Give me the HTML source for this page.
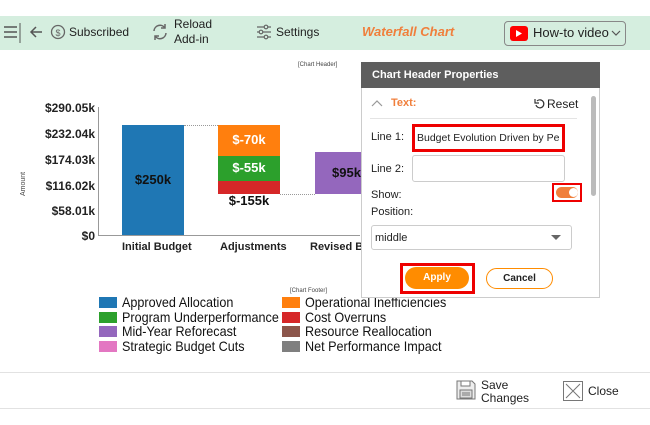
<!DOCTYPE html>
<html><head><meta charset="utf-8"><style>
*{box-sizing:border-box;margin:0;padding:0}
body{width:650px;height:425px;background:#fff;position:relative;overflow:hidden;font-family:"Liberation Sans",Arial,sans-serif;color:#222}
.a{position:absolute}
.tb{left:0;top:16px;width:650px;height:34px;background:#d5eedf}
.seg{font-family:"Liberation Sans",sans-serif;font-size:12px;color:#222}
.yl{font-weight:bold;font-size:12px;right:555px;text-align:right;width:80px}
.xl{font-weight:bold;font-size:11px;top:241px}
.lg{font-size:14px;color:#111;white-space:nowrap;transform:scaleX(0.9);transform-origin:left top}
.sw{width:18px;height:11px}
</style></head><body>
<div class="a tb"></div>
<svg class="a" style="left:3px;top:22px" width="44" height="22"><g stroke="#555" stroke-width="1.5" fill="none"><path d="M1 5h13M1 10h13M1 15h13"/><path d="M17 1v20" stroke-width="1"/><path d="M29 10h10M33 5l-5 5 5 5"/></g></svg>
<svg class="a" style="left:50px;top:24px" width="16" height="16"><circle cx="8" cy="8" r="6.5" stroke="#666" stroke-width="1.3" fill="none"/><text x="8" y="12" font-size="9" text-anchor="middle" fill="#666" font-family="Liberation Sans">$</text></svg>
<div class="a seg" style="left:69px;top:25px">Subscribed</div>
<svg class="a" style="left:151px;top:23px" width="18" height="18"><g stroke="#666" stroke-width="1.5" fill="none"><path d="M3 8a6 6 0 0 1 11-3"/><path d="M15 10a6 6 0 0 1-11 3"/><path d="M14 1v4h-4M4 17v-4h4"/></g></svg>
<div class="a seg" style="left:174px;top:17px;line-height:15px">Reload<br>Add-in</div>
<svg class="a" style="left:256px;top:24px" width="16" height="16"><g stroke="#666" stroke-width="1.2" fill="none"><path d="M1 3h14M1 8h14M1 13h14"/><circle cx="10" cy="3" r="1.8" fill="#d5eedf"/><circle cx="5" cy="8" r="1.8" fill="#d5eedf"/><circle cx="10" cy="13" r="1.8" fill="#d5eedf"/></g></svg>
<div class="a seg" style="left:276px;top:25px">Settings</div>
<div class="a" style="left:362px;top:24px;font-size:13px;font-weight:bold;font-style:italic;color:#f07f3c">Waterfall Chart</div>
<div class="a" style="left:504px;top:21px;width:122px;height:25px;border:1px solid #888;border-radius:4px"></div>
<div class="a" style="left:510px;top:26px;width:18px;height:15px;background:#f00;border-radius:3px"></div>
<svg class="a" style="left:515px;top:29px" width="8" height="9"><path d="M1 1l6 3.5-6 3.5z" fill="#fff"/></svg>
<div class="a seg" style="left:533px;top:25px;font-size:13px">How-to video</div>
<svg class="a" style="left:611px;top:30px" width="10" height="7"><path d="M1 1l4 4 4-4" stroke="#555" fill="none" stroke-width="1.2"/></svg>

<div class="a" style="left:298px;top:62px;font-size:6px;color:#444">[Chart Header]</div>
<div class="a" style="left:98px;top:107px;width:1px;height:129px;background:#999"></div>
<div class="a" style="left:98px;top:235px;width:262px;height:1px;background:#999"></div>
<div class="a yl" style="top:101px">$290.05k</div>
<div class="a yl" style="top:127px">$232.04k</div>
<div class="a yl" style="top:153px">$174.03k</div>
<div class="a yl" style="top:179px">$116.02k</div>
<div class="a yl" style="top:204px">$58.01k</div>
<div class="a yl" style="top:229px">$0</div>
<div class="a" style="left:20px;top:196px;font-size:7px;color:#444;transform:rotate(-90deg);transform-origin:left top">Amount</div>
<div class="a" style="left:122px;top:125px;width:62px;height:110px;background:#1f77b4"></div>
<div class="a" style="left:122px;top:172px;width:62px;text-align:center;font-weight:bold;font-size:13px;color:#111">$250k</div>
<div class="a" style="left:184px;top:125px;width:34px;border-top:1px dotted #999"></div>
<div class="a" style="left:218px;top:125px;width:62px;height:31px;background:#ff7f0e"></div>
<div class="a" style="left:218px;top:156px;width:62px;height:25px;background:#2ca02c"></div>
<div class="a" style="left:218px;top:181px;width:62px;height:13px;background:#d62728"></div>
<div class="a" style="left:218px;top:132px;width:62px;text-align:center;font-weight:bold;font-size:13px;color:#fff">$-70k</div>
<div class="a" style="left:218px;top:160px;width:62px;text-align:center;font-weight:bold;font-size:13px;color:#fff">$-55k</div>
<div class="a" style="left:218px;top:193px;width:62px;text-align:center;font-weight:bold;font-size:13px;color:#111">$-155k</div>
<div class="a" style="left:280px;top:194px;width:35px;border-top:1px dotted #999"></div>
<div class="a" style="left:315px;top:152px;width:46px;height:42px;background:#9467bd"></div>
<div class="a" style="left:332px;top:165px;font-weight:bold;font-size:13px;color:#111">$95k</div>
<div class="a xl" style="left:122px">Initial Budget</div>
<div class="a xl" style="left:220px">Adjustments</div>
<div class="a xl" style="left:310px">Revised Bu</div>
<div class="a" style="left:290px;top:288px;font-size:6px;color:#444">[Chart Footer]</div>

<div class="a sw" style="left:99px;top:297px;background:#1f77b4"></div><div class="a lg" style="left:122px;top:294px">Approved Allocation</div>
<div class="a sw" style="left:99px;top:312px;background:#2ca02c"></div><div class="a lg" style="left:122px;top:309px">Program Underperformance</div>
<div class="a sw" style="left:99px;top:326px;background:#9467bd"></div><div class="a lg" style="left:122px;top:323px">Mid-Year Reforecast</div>
<div class="a sw" style="left:99px;top:341px;background:#e377c2"></div><div class="a lg" style="left:122px;top:338px">Strategic Budget Cuts</div>
<div class="a sw" style="left:282px;top:297px;background:#ff7f0e"></div><div class="a lg" style="left:305px;top:294px">Operational Inefficiencies</div>
<div class="a sw" style="left:282px;top:312px;background:#d62728"></div><div class="a lg" style="left:305px;top:309px">Cost Overruns</div>
<div class="a sw" style="left:282px;top:326px;background:#8c564b"></div><div class="a lg" style="left:305px;top:323px">Resource Reallocation</div>
<div class="a sw" style="left:282px;top:341px;background:#7f7f7f"></div><div class="a lg" style="left:305px;top:338px">Net Performance Impact</div>

<div class="a" style="left:361px;top:62px;width:239px;height:236px;background:#fff;border:1px solid #ccc"></div>
<div class="a" style="left:361px;top:62px;width:239px;height:26px;background:#5e5e5e;color:#fff;font-weight:bold;font-size:11px;padding:7px 11px">Chart Header Properties</div>
<svg class="a" style="left:371px;top:99px" width="12" height="8"><path d="M1 7l5-5 5 5" stroke="#999" fill="none" stroke-width="1.2"/></svg>
<div class="a" style="left:391px;top:97px;font-size:11px;font-weight:bold;color:#f07f3c">Text:</div>
<svg class="a" style="left:534px;top:98px" width="11" height="11"><path d="M3 3a4 4 0 1 1-1 4" stroke="#333" fill="none" stroke-width="1.2"/><path d="M1 1v4h4" stroke="#333" fill="none" stroke-width="1.2"/></svg>
<div class="a" style="left:547px;top:97px;font-size:12px">Reset</div>
<div class="a" style="left:370px;top:118px;width:207px;height:1px;background:#e4e4e4"></div>
<div class="a" style="left:371px;top:131px;font-size:11px">Line 1:</div>
<div class="a" style="left:412px;top:124px;width:153px;height:28px;border:3px solid #e00;font-size:10.5px;padding:5px 2px;white-space:nowrap;overflow:hidden">Budget Evolution Driven by Pe</div>
<div class="a" style="left:371px;top:163px;font-size:11px">Line 2:</div>
<div class="a" style="left:412px;top:155px;width:153px;height:27px;border:1px solid #ccc;border-radius:3px"></div>
<div class="a" style="left:371px;top:189px;font-size:11px">Show:</div>
<div class="a" style="left:552px;top:183px;width:30px;height:19px;border:2px solid #e00"></div>
<div class="a" style="left:556px;top:187px;width:22px;height:11px;background:#f07f3c;border-radius:6px"></div>
<div class="a" style="left:569px;top:188px;width:9px;height:9px;background:#fff;border-radius:50%"></div>
<div class="a" style="left:371px;top:206px;font-size:11px">Position:</div>
<div class="a" style="left:371px;top:225px;width:201px;height:25px;border:1px solid #ccc;border-radius:3px;font-size:11px;padding:6px 3px">middle</div>
<svg class="a" style="left:551px;top:235px" width="10" height="6"><path d="M0 0h10l-5 5z" fill="#666"/></svg>
<div class="a" style="left:591px;top:96px;width:5px;height:100px;background:#bbb;border-radius:3px"></div>
<div class="a" style="left:400px;top:263px;width:75px;height:31px;border:3px solid #e00"></div>
<div class="a" style="left:405px;top:267px;width:64px;height:22px;background:#ff8c00;border-radius:11px;color:#fff;font-weight:bold;font-size:10px;text-align:center;line-height:22px">Apply</div>
<div class="a" style="left:486px;top:268px;width:67px;height:21px;border:1px solid #ff8c00;border-radius:11px;font-weight:bold;font-size:10px;text-align:center;line-height:19px">Cancel</div>

<div class="a" style="left:0;top:372px;width:650px;height:1px;background:#e2e2e2"></div>
<div class="a" style="left:0;top:408px;width:650px;height:1px;background:#e2e2e2"></div>
<svg class="a" style="left:456px;top:380px" width="20" height="20"><g stroke="#777" fill="#eee" stroke-width="1"><path d="M1 1h15l3 3v15H1z"/><rect x="5" y="1" width="9" height="5" fill="#fff"/><rect x="4" y="10" width="12" height="8" fill="#ddd"/><path d="M6 13h8M6 15h8" fill="none"/></g></svg>
<div class="a seg" style="left:481px;top:379px;line-height:13px">Save<br>Changes</div>
<svg class="a" style="left:563px;top:381px" width="20" height="20"><rect x="0.5" y="0.5" width="19" height="19" fill="none" stroke="#777"/><path d="M3 3l14 14M17 3L3 17" stroke="#777"/></svg>
<div class="a seg" style="left:588px;top:384px">Close</div>
</body></html>
